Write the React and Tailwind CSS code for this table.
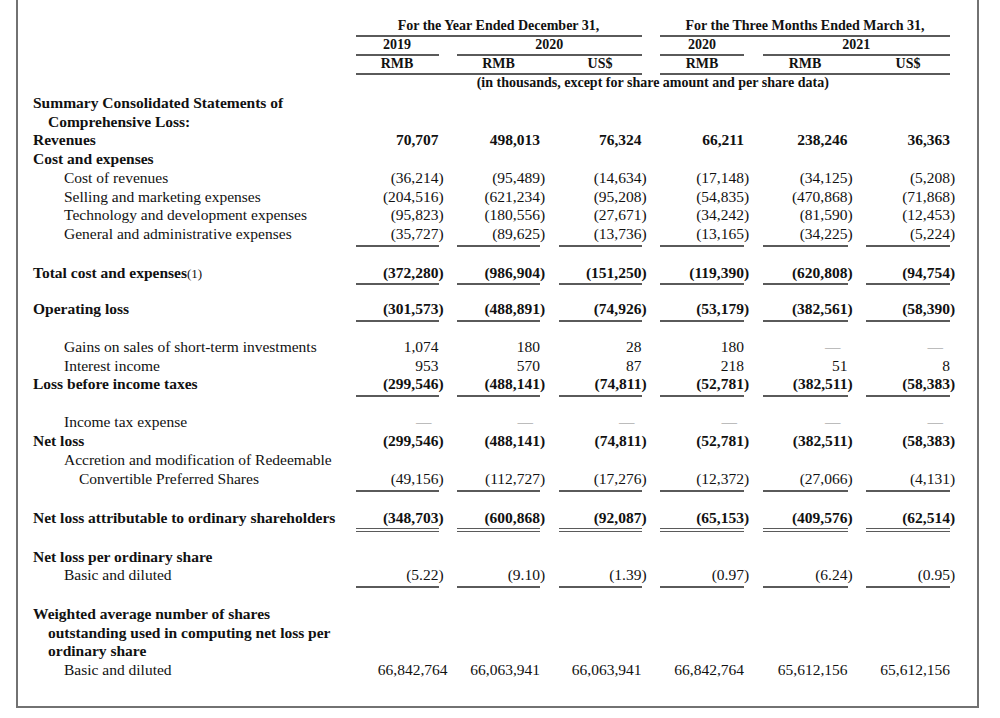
const COLS = "grid grid-cols-[304px_83px_83px_83px_84px_85px_84px] gap-x-[18.5px]"
const LINE = "border-[#5a5a5a]"

const rows = [
  { label: "Summary Consolidated Statements of", bold: true, mt: "mt-[3px]" },
  { label: "Comprehensive Loss:", bold: true, pl: "pl-[15px]" },
  { label: "Revenues", bold: true, values: ["70,707", "498,013", "76,324", "66,211", "238,246", "36,363"] },
  { label: "Cost and expenses", bold: true },
  { label: "Cost of revenues", pl: "pl-[31px]", values: ["(36,214)", "(95,489)", "(14,634)", "(17,148)", "(34,125)", "(5,208)"] },
  { label: "Selling and marketing expenses", pl: "pl-[31px]", values: ["(204,516)", "(621,234)", "(95,208)", "(54,835)", "(470,868)", "(71,868)"] },
  { label: "Technology and development expenses", pl: "pl-[31px]", values: ["(95,823)", "(180,556)", "(27,671)", "(34,242)", "(81,590)", "(12,453)"] },
  { label: "General and administrative expenses", pl: "pl-[31px]", line: "single", values: ["(35,727)", "(89,625)", "(13,736)", "(13,165)", "(34,225)", "(5,224)"] },
  { label: "Total cost and expenses", note: "(1)", bold: true, line: "single", mt: "mt-[17px]", values: ["(372,280)", "(986,904)", "(151,250)", "(119,390)", "(620,808)", "(94,754)"] },
  { label: "Operating loss", bold: true, line: "single", mt: "mt-[15px]", values: ["(301,573)", "(488,891)", "(74,926)", "(53,179)", "(382,561)", "(58,390)"] },
  { label: "Gains on sales of short-term investments", pl: "pl-[31px]", mt: "mt-[16px]", values: ["1,074", "180", "28", "180", "—", "—"] },
  { label: "Interest income", pl: "pl-[31px]", values: ["953", "570", "87", "218", "51", "8"] },
  { label: "Loss before income taxes", bold: true, line: "single", values: ["(299,546)", "(488,141)", "(74,811)", "(52,781)", "(382,511)", "(58,383)"] },
  { label: "Income tax expense", pl: "pl-[31px]", mt: "mt-[16px]", values: ["—", "—", "—", "—", "—", "—"] },
  { label: "Net loss", bold: true, values: ["(299,546)", "(488,141)", "(74,811)", "(52,781)", "(382,511)", "(58,383)"] },
  { label: "Accretion and modification of Redeemable", pl: "pl-[31px]" },
  { label: "Convertible Preferred Shares", pl: "pl-[46px]", line: "single", mt: "mt-[1px]", values: ["(49,156)", "(112,727)", "(17,276)", "(12,372)", "(27,066)", "(4,131)"] },
  { label: "Net loss attributable to ordinary shareholders", bold: true, line: "double", mt: "mt-[17px]", values: ["(348,703)", "(600,868)", "(92,087)", "(65,153)", "(409,576)", "(62,514)"] },
  { label: "Net loss per ordinary share", bold: true, mt: "mt-[16px]" },
  { label: "Basic and diluted", pl: "pl-[31px]", line: "single", values: ["(5.22)", "(9.10)", "(1.39)", "(0.97)", "(6.24)", "(0.95)"] },
  { label: "Weighted average number of shares", bold: true, mt: "mt-[17px]" },
  { label: "outstanding used in computing net loss per", bold: true, pl: "pl-[15px]" },
  { label: "ordinary share", bold: true, pl: "pl-[15px]" },
  { label: "Basic and diluted", pl: "pl-[31px]", last: true, values: ["66,842,764", "66,063,941", "66,063,941", "66,842,764", "65,612,156", "65,612,156"] },
]

function Num({ v }) {
  if (v === "—") return <span className="mr-[7px] text-[#888888]">—</span>
  if (v.endsWith(")")) {
    return (
      <>
        {v.slice(0, -1)}
        <span className="inline-block w-0">)</span>
      </>
    )
  }
  return v
}

function Row({ row }) {
  let lineCls = ""
  if (row.line === "single") lineCls = `border-b-2 ${LINE} pb-[1px]`
  if (row.line === "double") lineCls = `border-b-4 border-double ${LINE}`

  return (
    <div className={`${COLS} items-start leading-[18.7px] ${row.mt || ""}`}>
      <div className={`whitespace-nowrap ${row.pl || ""} ${row.bold ? "font-bold" : ""}`}>
        {row.label}
        {row.note && <span className="text-[13px] font-normal">{row.note}</span>}
      </div>
      {(row.values || []).map((v, i) => (
        <div
          key={i}
          className={`text-right whitespace-nowrap ${row.bold ? "font-bold" : ""} ${lineCls}`}
        >
          {row.last && i === 0 ? <span className="-mr-[9px]">{v}</span> : <Num v={v} />}
        </div>
      ))}
    </div>
  )
}

function Header() {
  const sub = "grid grid-cols-[83px_83px_83px] gap-x-[18.5px]"
  const sub2 = "grid grid-cols-[84px_85px_84px] gap-x-[18.5px]"
  return (
    <div className="text-[14px] font-bold leading-[16px] text-center">
      <div className={COLS}>
        <div />
        <div className={`col-span-3 border-b-2 ${LINE} pb-[1px]`}>For the Year Ended December 31,</div>
        <div className={`col-span-3 border-b-2 ${LINE} pb-[1px]`}>For the Three Months Ended March 31,</div>
      </div>
      <div className={COLS}>
        <div />
        <div className={`border-b-2 ${LINE} pb-[1px]`}>2019</div>
        <div className={`col-span-2 border-b-2 ${LINE} pb-[1px]`}>2020</div>
        <div className={`border-b-2 ${LINE} pb-[1px]`}>2020</div>
        <div className={`col-span-2 border-b-2 ${LINE} pb-[1px]`}>2021</div>
      </div>
      <div className={COLS}>
        <div />
        <div className={`col-span-3 ${sub} border-b-2 ${LINE} pb-[1px]`}>
          <div>RMB</div>
          <div>RMB</div>
          <div>US$</div>
        </div>
        <div className={`col-span-3 ${sub2} border-b-2 ${LINE} pb-[1px]`}>
          <div>RMB</div>
          <div>RMB</div>
          <div>US$</div>
        </div>
      </div>
      <div className={COLS}>
        <div />
        <div className="col-span-6 whitespace-nowrap">
          (in thousands, except for share amount and per share data)
        </div>
      </div>
    </div>
  )
}

export default function App() {
  return (
    <div className="w-[1000px] h-[718px] bg-white text-[#111111] font-['Liberation_Serif','Times_New_Roman',serif]">
      <div className="ml-[16px] w-[963px] border-x-2 border-b-2 border-[#727272] pl-[15px] pt-[18px] pb-[26px] text-[15.5px]">
        <Header />
        {rows.map((row, i) => (
          <Row key={i} row={row} />
        ))}
      </div>
    </div>
  )
}
